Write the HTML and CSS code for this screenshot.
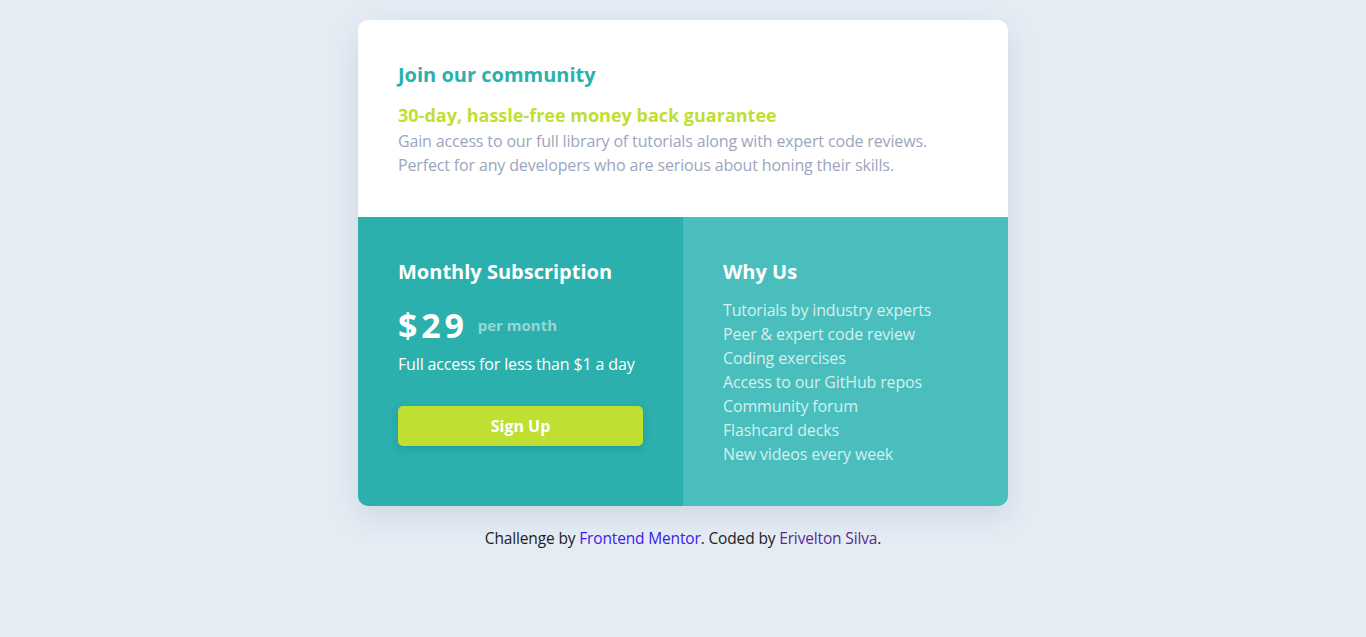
FILE: index.html
```html
<!DOCTYPE html>
<html lang="en">
<head>
<meta charset="utf-8">
<title>Single price grid component</title>
<link rel="stylesheet" href="styles.css">
</head>
<body>
<main class="card">
  <section class="intro">
    <h1 class="intro-title">Join our community</h1>
    <h2 class="intro-subtitle">30-day, hassle-free money back guarantee</h2>
    <p class="intro-text">Gain access to our full library of tutorials along with expert code reviews.<br>Perfect for any developers who are serious about honing their skills.</p>
  </section>
  <div class="bottom">
    <section class="subscription">
      <h3 class="col-title">Monthly Subscription</h3>
      <div class="price"><span class="amount">$29</span><span class="period">per month</span></div>
      <p class="price-note">Full access for less than $1 a day</p>
      <button class="signup">Sign Up</button>
    </section>
    <section class="why">
      <h3 class="col-title">Why Us</h3>
      <ul class="why-list">
        <li>Tutorials by industry experts</li>
        <li>Peer &amp; expert code review</li>
        <li>Coding exercises</li>
        <li>Access to our GitHub repos</li>
        <li>Community forum</li>
        <li>Flashcard decks</li>
        <li>New videos every week</li>
      </ul>
    </section>
  </div>
</main>
<footer class="attribution">
  Challenge by <a class="fm" href="#">Frontend Mentor</a>. Coded by <a class="me" href="#">Erivelton Silva</a>.
</footer>
</body>
</html>
```
FILE: styles.css
```css
* { box-sizing: border-box; }

body {
  margin: 0;
  min-height: 637px;
  background: #e5ecf4;
  font-family: "Open Sans", sans-serif;
  font-size: 16px;
  letter-spacing: -0.15px;
}

.card {
  width: 650px;
  margin: 20px auto 0;
  border-radius: 10px;
  overflow: hidden;
  box-shadow: 0 10px 30px rgba(60, 90, 130, 0.14);
}

.intro {
  background: #fff;
  padding: 43px 40px 40px;
}

.intro-title {
  margin: 0;
  font-size: 20px;
  line-height: 24px;
  font-weight: 700;
  letter-spacing: 0;
  color: #2bb0ae;
}

.intro-subtitle {
  margin: 16px 0 0;
  font-size: 18px;
  line-height: 24px;
  font-weight: 700;
  letter-spacing: 0;
  color: #bfdf32;
}

.intro-text {
  margin: 2px 0 0;
  line-height: 24px;
  color: #9ba6bd;
}

.bottom {
  display: flex;
}

.subscription,
.why {
  flex: 1;
  padding: 43px 40px 60px;
  color: #fff;
}

.subscription { background: #2bb0ae; }
.why { background: #4abebd; padding-bottom: 40px; }

.col-title {
  margin: 0;
  font-size: 20px;
  line-height: 24px;
  font-weight: 700;
  letter-spacing: 0;
}

.price {
  display: flex;
  align-items: center;
  margin-top: 21px;
  height: 40px;
}

.amount {
  font-size: 34px;
  line-height: 40px;
  font-weight: 700;
  letter-spacing: 3.8px;
}

.period {
  margin-left: 10px;
  font-size: 15px;
  font-weight: 700;
  letter-spacing: 0;
  color: rgba(255, 255, 255, 0.5);
}

.price-note {
  margin: 7px 0 0;
  line-height: 24px;
  font-weight: 500;
}

.signup {
  display: block;
  width: 245px;
  height: 40px;
  margin-top: 30px;
  border: 0;
  border-radius: 5px;
  background: #bfe032;
  color: #fff;
  font-family: inherit;
  font-size: 16px;
  font-weight: 700;
  letter-spacing: 0;
  box-shadow: 0 3px 8px rgba(0, 60, 60, 0.18);
}

.why-list {
  list-style: none;
  margin: 14px 0 0;
  padding: 0;
  line-height: 24px;
  color: rgba(255, 255, 255, 0.78);
}

.attribution {
  margin-top: 20px;
  text-align: center;
  line-height: 24px;
  color: #222;
  font-size: 15.5px;
}

.attribution a { text-decoration: none; }
.attribution .fm { color: #3b20ee; }
.attribution .me { color: #5b2a95; }
```
